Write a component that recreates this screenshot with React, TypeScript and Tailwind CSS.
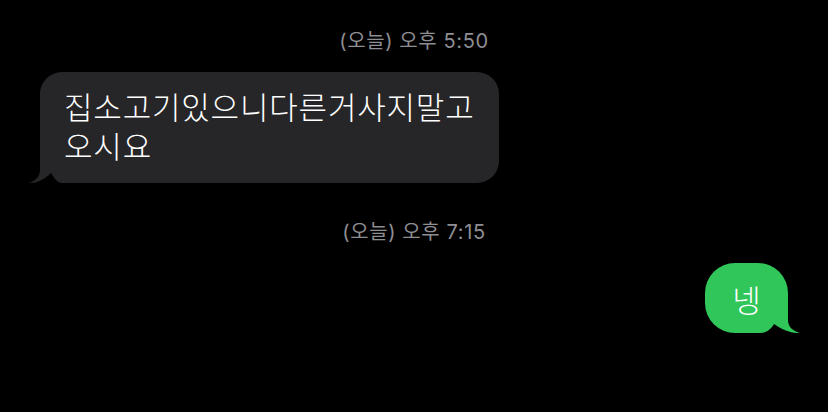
import React from "react";

const font = { fontFamily: '"Noto Sans CJK KR", "Noto Sans", sans-serif' };
const stampFont = { fontFamily: 'Inter, "Noto Sans CJK KR", sans-serif' };

function Stamp({ text }: { text: string }) {
  return (
    <div className="text-center text-[20px] tracking-[0.6px] leading-[20px] text-[#8e8e93]" style={stampFont}>
      {text}
    </div>
  );
}

export default function App() {
  return (
    <div className="w-[828px] h-[412px] bg-black flex flex-col overflow-hidden" style={font}>
      <div className="pt-[31px]">
        <Stamp text="(오늘) 오후 5:50" />
      </div>
      <div className="mt-[21px] ml-[40px] w-[459px] relative">
        <div className="bg-[#262628] rounded-[22px] rounded-bl-none pl-[24px] pt-[14px] pb-[19px] text-white text-[31px] tracking-[0.8px] font-light whitespace-nowrap flex flex-col">
          <div className="h-[39px] leading-[39px]">집소고기있으니다른거사지말고</div>
          <div className="h-[39px] leading-[39px]">오시요</div>
        </div>
        <svg className="absolute left-[-11px] bottom-0" width="34" height="26" viewBox="0 0 34 26">
          <path d="M11 0 H34 V26 H11 Z" fill="#000" />
          <path d="M11 0 L11 13 C11 20 6 24 0 26 C8 26.5 16 22 22 16 C25 21 28 25.5 33 26 L34 26 L34 0 Z" fill="#262628" />
        </svg>
      </div>
      <div className="mt-[39px]">
        <Stamp text="(오늘) 오후 7:15" />
      </div>
      <div className="mt-[21px] self-end mr-[40px] relative">
        <div className="bg-[#31c659] rounded-[30px] rounded-br-none w-[83px] h-[70px] flex items-center justify-center text-white text-[31px] font-light leading-none">
          넹
        </div>
        <svg className="absolute right-[-12px] bottom-0" width="40" height="24" viewBox="0 2 40 24">
          <path d="M0 0 H28 V26 H0 Z" fill="#000" />
          <path d="M28 0 L28 13 C28 20 33 24 40 26 C32 26.5 22 23 14 17 C11 22 7 26 0 26 L0 0 Z" fill="#31c659" />
        </svg>
      </div>
    </div>
  );
}
